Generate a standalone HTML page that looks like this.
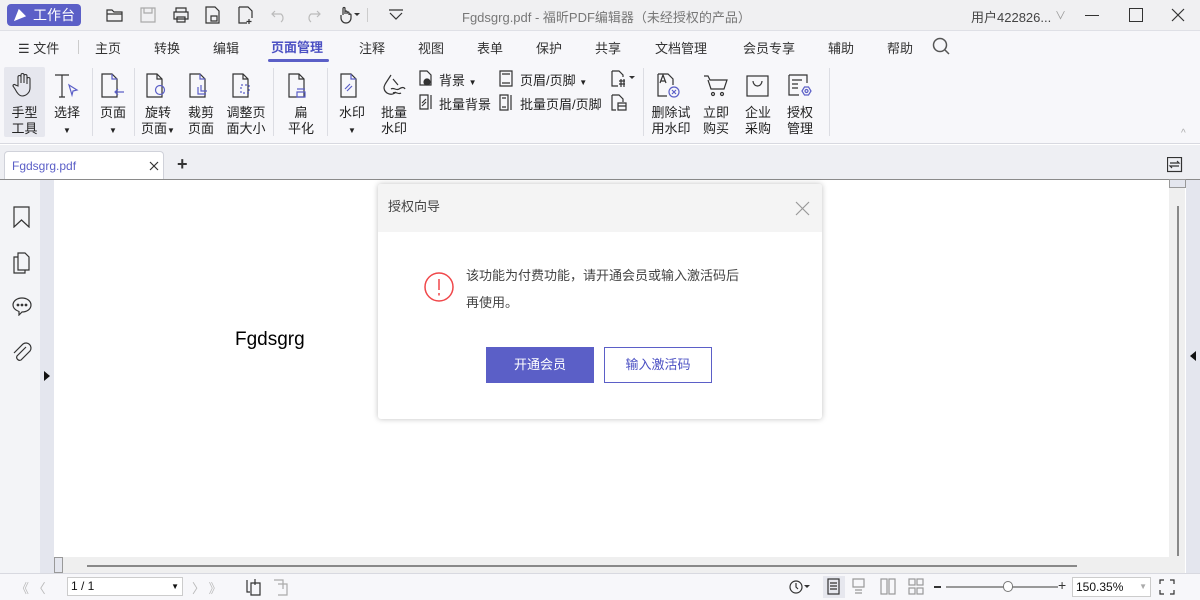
<!DOCTYPE html><html><head><meta charset="utf-8"><style>
*{margin:0;padding:0;box-sizing:border-box}
body{width:1200px;height:600px;overflow:hidden;position:relative;background:#fff;font-family:"Liberation Sans","Noto Sans CJK SC",sans-serif;color:#333}
.a{position:absolute}
.t{font-size:13px;white-space:nowrap}
svg{position:absolute;fill:none;stroke:#333;stroke-width:1.2}
.lbl{position:absolute;font-size:13px;line-height:16px;text-align:center;color:#222}
.sep{position:absolute;width:1px;background:#dcdde3}
</style></head><body>
<div class="a" style="left:0;top:0;width:1200px;height:30px;background:#f0f0f2"></div>
<div class="a" style="left:7px;top:4px;width:74px;height:22px;background:#5b5fc7;border-radius:4px;color:#fff;font-size:14px;line-height:22px;padding-left:26px">工作台</div>
<svg style="left:13px;top:8px" width="14" height="14"><path d="M2 12L6 2L12 8Z" fill="#fff" stroke="#fff"/></svg>
<svg style="left:106px;top:7px" width="18" height="16"><path d="M1 3h5l2 2h8v9H1zM1 7h15"/></svg>
<svg style="left:140px;top:7px;stroke:#aaa" width="16" height="16"><path d="M1 1h14v14H1zM4 1v5h8V1"/></svg>
<svg style="left:172px;top:6px" width="18" height="18"><path d="M4 6V2h10v4M2 6h14v7H2zM5 11h8v5H5z"/></svg>
<svg style="left:205px;top:6px" width="16" height="18"><path d="M1 1h9l4 4v12H1zM6 10h6v5H6z"/></svg>
<svg style="left:238px;top:6px" width="16" height="18"><path d="M1 1h9l4 4v7M1 1v16h8M11 13v5M8.5 15.5h5"/></svg>
<svg style="left:271px;top:7px;stroke:#bbb" width="16" height="16"><path d="M4 4l-3 3 3 3M1 7h9a5 5 0 0 1 0 8"/></svg>
<svg style="left:305px;top:7px;stroke:#bbb" width="16" height="16"><path d="M12 4l3 3-3 3M15 7H6a5 5 0 0 0 0 8"/></svg>
<svg style="left:338px;top:6px" width="24" height="18"><path d="M5 9V2.5a1 1 0 0 1 2 0V8M7 8V6a1 1 0 0 1 2 0v2M9 8V7a1 1 0 0 1 2 0v2M11 9a1 1 0 0 1 2 0v3a5 5 0 0 1-10 0v-3"/><path d="M16 7h6l-3 3z" fill="#333" stroke="none"/></svg>
<div class="a" style="left:367px;top:8px;width:1px;height:14px;background:#ccc"></div>
<svg style="left:388px;top:9px" width="16" height="12"><path d="M1 1h14M2 4l6 6 6-6"/></svg>
<div class="a t" style="left:462px;top:7px;color:#777">Fgdsgrg.pdf - 福昕PDF编辑器（未经授权的产品）</div>
<div class="a t" style="left:971px;top:7px;color:#444">用户422826...</div>
<div class="a t" style="left:1055px;top:7px;color:#999;font-size:11px">∨</div>
<div class="a" style="left:1085px;top:15px;width:14px;height:1px;background:#333"></div>
<div class="a" style="left:1129px;top:8px;width:14px;height:14px;border:1.2px solid #333"></div>
<svg style="left:1171px;top:8px" width="14" height="14"><path d="M1 1l12 12M13 1L1 13"/></svg>
<div class="a" style="left:0;top:30px;width:1200px;height:33px;background:#f7f7fa;border-top:1px solid #dfe0e6"></div>
<div class="a t" style="left:18px;top:38px;color:#333">☰ 文件</div>
<div class="a" style="left:78px;top:40px;width:1px;height:14px;background:#ccc"></div>
<div class="a t" style="left:95px;top:38px;color:#333">主页</div>
<div class="a t" style="left:154px;top:38px;color:#333">转换</div>
<div class="a t" style="left:213px;top:38px;color:#333">编辑</div>
<div class="a t" style="left:271px;top:37px;color:#4b50c3;font-weight:bold">页面管理</div>
<div class="a" style="left:268px;top:59px;width:61px;height:3px;background:#5b5fc7;border-radius:2px"></div>
<div class="a t" style="left:359px;top:38px">注释</div>
<div class="a t" style="left:418px;top:38px">视图</div>
<div class="a t" style="left:477px;top:38px">表单</div>
<div class="a t" style="left:536px;top:38px">保护</div>
<div class="a t" style="left:595px;top:38px">共享</div>
<div class="a t" style="left:655px;top:38px">文档管理</div>
<div class="a t" style="left:743px;top:38px">会员专享</div>
<div class="a t" style="left:828px;top:38px">辅助</div>
<div class="a t" style="left:887px;top:38px">帮助</div>
<svg style="left:932px;top:37px;stroke:#555;stroke-width:1.5" width="18" height="18"><circle cx="8" cy="8" r="6.5"/><path d="M13 13l4 4"/></svg>
<div class="a" style="left:0;top:63px;width:1200px;height:81px;background:#f7f7fa;border-bottom:1px solid #d8d9e0"></div>
<div class="a" style="left:4px;top:67px;width:41px;height:70px;background:#e6e7ee;border-radius:2px"></div>
<svg style="left:12px;top:72px;stroke-width:1.1" width="24" height="26"><path d="M6 14V5a1.5 1.5 0 0 1 3 0v6V3a1.5 1.5 0 0 1 3 0v8V4a1.5 1.5 0 0 1 3 0v8V7a1.5 1.5 0 0 1 3 0v9a8 8 0 0 1-8 8c-3 0-5-3-7-7l-2-3a1.4 1.4 0 0 1 2.5-1z"/></svg>
<div class="lbl" style="left:4px;top:105px;width:41px">手型<br>工具</div>
<svg style="left:54px;top:74px" width="26" height="26"><path d="M1 1h14M8 1v22M5 23h6"/><path d="M15 11l8 5-4 1-1 4z" stroke="#5b5fc7"/></svg>
<div class="lbl" style="left:47px;top:105px;width:40px">选择<br><span style="font-size:8px">▼</span></div>
<div class="sep" style="left:92px;top:68px;height:68px"></div>
<svg style="left:101px;top:73px" width="24" height="26"><path d="M1 1h10l5 5v18H1z"/><path d="M11 1v5h5M23 19h-9M17 16l-3 3 3 3" stroke="#5b5fc7"/></svg>
<div class="lbl" style="left:93px;top:105px;width:40px">页面<br><span style="font-size:8px">▼</span></div>
<div class="sep" style="left:134px;top:68px;height:68px"></div>
<svg style="left:146px;top:73px" width="24" height="26"><path d="M1 1h10l5 5v18H1z"/><path d="M11 1v5h5"/><circle cx="14" cy="17" r="4.5" stroke="#5b5fc7"/></svg>
<div class="lbl" style="left:138px;top:105px;width:40px">旋转<br>页面<span style="font-size:8px">▼</span></div>
<svg style="left:189px;top:73px" width="24" height="26"><path d="M1 1h10l5 5v18H1z"/><path d="M11 1v5h5M9 14v7h8M12 12v6h6" stroke="#5b5fc7"/></svg>
<div class="lbl" style="left:181px;top:105px;width:40px">裁剪<br>页面</div>
<svg style="left:232px;top:73px" width="24" height="26"><path d="M1 1h10l5 5v18H1z"/><path d="M11 1v5h5"/><rect x="9" y="12" width="8" height="8" stroke="#5b5fc7" stroke-dasharray="2 2"/></svg>
<div class="lbl" style="left:223px;top:105px;width:46px">调整页<br>面大小</div>
<div class="sep" style="left:273px;top:68px;height:68px"></div>
<svg style="left:288px;top:73px" width="24" height="26"><path d="M1 1h10l5 5v18H1z"/><path d="M11 1v5h5"/><path d="M9 16h8M9 19h8v5H9z" stroke="#5b5fc7"/></svg>
<div class="lbl" style="left:281px;top:105px;width:40px">扁<br>平化</div>
<div class="sep" style="left:327px;top:68px;height:68px"></div>
<svg style="left:340px;top:73px" width="24" height="26"><path d="M1 1h10l5 5v18H1z"/><path d="M11 1v5h5M5 16l5-5M7 18l5-5" stroke="#5b5fc7"/></svg>
<div class="lbl" style="left:332px;top:105px;width:40px">水印<br><span style="font-size:8px">▼</span></div>
<svg style="left:382px;top:72px" width="26" height="26"><path d="M9 3c-5 8-7 10-7 13a7 7 0 0 0 12 4M11 7l5 6M9 17c3-2 5 2 8 0s5-2 6 0M11 21c3-2 5 2 8 0"/></svg>
<div class="lbl" style="left:374px;top:105px;width:40px">批量<br>水印</div>
<svg style="left:419px;top:70px" width="14" height="17"><path d="M1 1h7l4 4v10H1z"/><circle cx="8" cy="12" r="3" fill="#333"/></svg>
<div class="a t" style="left:439px;top:70px;color:#222">背景 <span style="font-size:8px">▼</span></div>
<svg style="left:419px;top:94px" width="14" height="17"><path d="M1 1h8v14H1zM12 1v14M3 9l4-4M3 12l4-4"/></svg>
<div class="a t" style="left:439px;top:94px;color:#222">批量背景</div>
<svg style="left:499px;top:70px" width="14" height="17"><path d="M1 1h12v15H1zM3 4h8M3 13h8"/></svg>
<div class="a t" style="left:520px;top:70px;color:#222">页眉/页脚 <span style="font-size:8px">▼</span></div>
<svg style="left:499px;top:94px" width="14" height="17"><path d="M1 1h8v15H1zM12 1v15M3 4h4M3 13h4"/></svg>
<div class="a t" style="left:520px;top:94px;color:#222">批量页眉/页脚</div>
<svg style="left:611px;top:70px" width="26" height="17"><path d="M1 1h7l4 4v2M1 1v15h6M8 11h6M8 14h6M10 9v8M13 9v8"/><path d="M18 6h6l-3 3z" fill="#333" stroke="none"/></svg>
<svg style="left:611px;top:94px" width="20" height="17"><path d="M1 1h7l4 4v3M1 1v15h4M7 9h8v7H7zM7 12h8"/></svg>
<div class="sep" style="left:643px;top:68px;height:68px"></div>
<svg style="left:657px;top:73px" width="26" height="26"><path d="M1 1h10l5 5v6M1 1v22h9M3 10l3-8 3 8M4 8h4"/><circle cx="17" cy="19" r="5" stroke="#5b5fc7"/><path d="M15 17l4 4M19 17l-4 4" stroke="#5b5fc7"/></svg>
<div class="lbl" style="left:648px;top:105px;width:46px">删除试<br>用水印</div>
<svg style="left:703px;top:74px" width="26" height="24"><path d="M1 2h4l2 4h17l-3 9H8L5 6"/><circle cx="10" cy="20" r="1.5"/><circle cx="19" cy="20" r="1.5"/></svg>
<div class="lbl" style="left:696px;top:105px;width:40px">立即<br>购买</div>
<svg style="left:746px;top:75px" width="24" height="22"><rect x="1" y="1" width="21" height="20"/><path d="M7 6a4.5 5 0 0 0 9 0"/></svg>
<div class="lbl" style="left:738px;top:105px;width:40px">企业<br>采购</div>
<svg style="left:788px;top:74px" width="26" height="24"><path d="M1 1h18v8M1 1v20h10M4 6h10M4 10h6M4 14h6"/><path d="M14 17l2.5-4h4l2.5 4-2.5 4h-4z" stroke="#5b5fc7"/><circle cx="18.5" cy="17" r="1.5" stroke="#5b5fc7"/></svg>
<div class="lbl" style="left:780px;top:105px;width:40px">授权<br>管理</div>
<div class="sep" style="left:829px;top:68px;height:68px"></div>
<div class="a" style="left:1181px;top:128px;font-size:10px;color:#aaa">^</div>
<div class="a" style="left:0;top:145px;width:1200px;height:34px;background:#eeeff3"></div>
<div class="a" style="left:4px;top:151px;width:160px;height:29px;background:#fff;border:1px solid #d0d2da;border-bottom:none;border-radius:4px 4px 0 0"></div>
<div class="a t" style="left:12px;top:159px;color:#5b5fc7;font-size:12px">Fgdsgrg.pdf</div>
<svg style="left:149px;top:161px" width="10" height="10"><path d="M1 1l8 8M9 1L1 9"/></svg>
<div class="a" style="left:177px;top:154px;font-size:18px;font-weight:bold;color:#333">+</div>
<svg style="left:1167px;top:157px" width="16" height="16"><rect x="0.5" y="0.5" width="14" height="14"/><path d="M3 6h9l-2-2M12 9H3l2 2"/></svg>
<div class="a" style="left:0;top:179px;width:1200px;height:1px;background:#8a8a8a"></div>
<div class="a" style="left:0;top:180px;width:40px;height:393px;background:#f3f4f7"></div>
<div class="a" style="left:40px;top:180px;width:14px;height:393px;background:#e4e6ee"></div>
<div class="a" style="left:44px;top:371px;width:0;height:0;border-left:6px solid #111;border-top:5px solid transparent;border-bottom:5px solid transparent"></div>
<svg style="left:13px;top:206px" width="18" height="22"><path d="M1 1h15v20l-7.5-7L1 21z"/></svg>
<svg style="left:13px;top:252px" width="18" height="22"><path d="M5 1h7l4 4v13H5zM5 5H1v16h11v-3"/></svg>
<svg style="left:11px;top:296px" width="22" height="20"><path d="M11 2c5 0 9 3 9 7s-4 7-9 7l-3 3v-3.5C4 14 2 12 2 9c0-4 4-7 9-7z"/><circle cx="7" cy="9" r=".8" fill="#333"/><circle cx="11" cy="9" r=".8" fill="#333"/><circle cx="15" cy="9" r=".8" fill="#333"/></svg>
<svg style="left:12px;top:342px" width="20" height="22"><path d="M14 5L5 14a3 3 0 0 0 4 4l9-9a5 5 0 0 0-7-7L2 11"/></svg>
<div class="a" style="left:235px;top:329px;font-size:19px;color:#000;font-family:'Liberation Sans',sans-serif">Fgdsgrg</div>
<div class="a" style="left:1169px;top:180px;width:16px;height:393px;background:#efefef"></div>
<div class="a" style="left:1169px;top:179px;width:17px;height:9px;background:#e4e6ee;border:1px solid #999"></div>
<div class="a" style="left:1177px;top:206px;width:2px;height:350px;background:#888"></div>
<div class="a" style="left:1186px;top:180px;width:14px;height:393px;background:#e4e6ee"></div>
<div class="a" style="left:1190px;top:351px;width:0;height:0;border-right:6px solid #111;border-top:5px solid transparent;border-bottom:5px solid transparent"></div>
<div class="a" style="left:54px;top:557px;width:1115px;height:16px;background:#efefef"></div>
<div class="a" style="left:54px;top:557px;width:9px;height:16px;background:#e4e6ee;border:1px solid #999"></div>
<div class="a" style="left:87px;top:565px;width:990px;height:2px;background:#888"></div>
<div class="a" style="left:378px;top:184px;width:444px;height:235px;background:#fff;border-radius:3px;box-shadow:0 0 6px rgba(0,0,0,.25);overflow:hidden">
<div style="height:48px;background:#f4f4f4"></div></div>
<div class="a t" style="left:388px;top:196px;color:#444">授权向导</div>
<svg style="left:795px;top:201px;stroke:#999" width="15" height="15"><path d="M1 1l13 13M14 1L1 14"/></svg>
<svg style="left:424px;top:272px;stroke:#f0474a;stroke-width:1.5" width="30" height="30"><circle cx="15" cy="15" r="14"/><path d="M15 7v11M15 21v2.5"/></svg>
<div class="a" style="left:466px;top:262px;font-size:13px;line-height:27px;color:#444">该功能为付费功能，请开通会员或输入激活码后<br>再使用。</div>
<div class="a" style="left:486px;top:347px;width:108px;height:36px;background:#5b5fc7;color:#fff;font-size:13px;line-height:36px;text-align:center">开通会员</div>
<div class="a" style="left:604px;top:347px;width:108px;height:36px;border:1px solid #5b5fc7;color:#4b50c3;font-size:13px;line-height:34px;text-align:center">输入激活码</div>
<div class="a" style="left:0;top:573px;width:1200px;height:27px;background:#f7f7fa;border-top:1px solid #d8d9e0"></div>
<div class="a t" style="left:16px;top:578px;color:#bbb">《 〈</div>
<div class="a" style="left:67px;top:577px;width:116px;height:19px;background:#fff;border:1px solid #ccc;font-size:12px;line-height:17px;padding-left:3px;color:#111">1 / 1<span style="float:right;font-size:8px;padding-right:3px">▼</span></div>
<div class="a t" style="left:192px;top:578px;color:#bbb">〉 》</div>
<svg style="left:246px;top:578px" width="16" height="18"><path d="M1 2v12h3M5 5h9v12H5zM9 1v6"/></svg>
<svg style="left:273px;top:578px;stroke:#aaa" width="16" height="18"><path d="M1 2h9v9M5 6h9v11H5"/></svg>
<svg style="left:789px;top:579px" width="22" height="16"><circle cx="7" cy="8" r="6"/><path d="M7 4v4l2 2"/><path d="M15 6h6l-3 3z" fill="#333" stroke="none"/></svg>
<div class="a" style="left:823px;top:576px;width:22px;height:22px;background:#e6e7ee"></div>
<svg style="left:827px;top:578px" width="14" height="18"><rect x="1" y="1" width="11" height="15"/><path d="M3 5h7M3 8h7M3 11h7"/></svg>
<svg style="left:852px;top:578px;stroke:#999" width="14" height="18"><path d="M1 1h11v8H1zM3 12h7M3 15h7"/></svg>
<svg style="left:880px;top:578px;stroke:#999" width="16" height="18"><rect x="1" y="1" width="6" height="15"/><rect x="9" y="1" width="6" height="15"/></svg>
<svg style="left:908px;top:578px;stroke:#999" width="16" height="18"><rect x="1" y="1" width="6" height="6"/><rect x="9" y="1" width="6" height="6"/><rect x="1" y="10" width="6" height="6"/><rect x="9" y="10" width="6" height="6"/></svg>
<div class="a" style="left:934px;top:586px;width:7px;height:1.5px;background:#333"></div>
<div class="a" style="left:946px;top:586px;width:112px;height:1.5px;background:#999"></div>
<div class="a" style="left:1003px;top:581px;width:10px;height:11px;background:#fff;border:1px solid #777;border-radius:5px"></div>
<div class="a t" style="left:1058px;top:577px;font-size:14px">+</div>
<div class="a" style="left:1072px;top:577px;width:79px;height:20px;background:#fff;border:1px solid #ccc;font-size:12px;line-height:18px;padding-left:3px;color:#111">150.35%<span style="float:right;font-size:8px;padding-right:3px;color:#aaa">▼</span></div>
<svg style="left:1159px;top:579px" width="16" height="16"><path d="M1 5V1h4M11 1h4v4M15 11v4h-4M5 15H1v-4"/></svg>
</body></html>
